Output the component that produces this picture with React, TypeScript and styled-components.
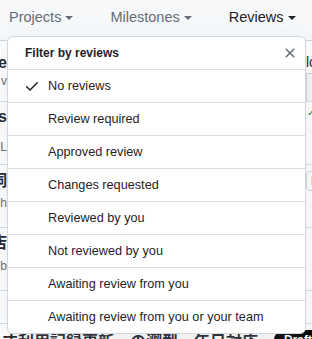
import React from "react";
import styled, { createGlobalStyle } from "styled-components";

const Global = createGlobalStyle`
  html, body { margin: 0; padding: 0; background: #ffffff; }
  body { font-family: "Liberation Sans", Arial, sans-serif; color: #1f2328; }
  * { box-sizing: border-box; }
`;

const Page = styled.div`
  position: relative;
  width: 312px;
  height: 339px;
  overflow: hidden;
  background: #ffffff;
`;

const TopBar = styled.div`
  height: 41px;
  background: #f6f8fa;
  border-bottom: 1px solid #d0d7de;
  display: flex;
  align-items: flex-start;
  gap: 37px;
  padding: 9px 0 0 9px;
`;

const FilterButton = styled.div<{ $active?: boolean }>`
  display: flex;
  align-items: center;
  font-size: 14.5px;
  line-height: 17px;
  color: ${(p) => (p.$active ? "#1f2328" : "#656d76")};
  white-space: nowrap;
`;

const Caret = styled.span`
  display: inline-block;
  width: 0;
  height: 0;
  margin-left: 4px;
  margin-top: 1px;
  border-top: 4.5px solid currentColor;
  border-left: 4px solid transparent;
  border-right: 4px solid transparent;
`;

const List = styled.div`
  display: flex;
  flex-direction: column;
`;

const Row = styled.div<{ $h: number; $pt: number }>`
  height: ${(p) => p.$h}px;
  padding-top: ${(p) => p.$pt}px;
  border-bottom: 1px solid #d8dee4;
  display: flex;
  justify-content: space-between;
`;

const LeftPeek = styled.div`
  width: 7px;
  overflow: hidden;
  display: flex;
  flex-direction: column;
  align-items: flex-end;
`;

const PeekTitle = styled.div`
  font-size: 16px;
  line-height: 20px;
  font-weight: 700;
  white-space: nowrap;
  color: #1f2328;
  font-family: "Liberation Sans", "Noto Sans CJK JP", sans-serif;
`;

const PeekSub = styled.div<{ $mt: number }>`
  font-size: 12px;
  line-height: 16px;
  margin-top: ${(p) => p.$mt}px;
  white-space: nowrap;
  color: #656d76;
`;

const RightPeek = styled.div`
  width: 6px;
  overflow: hidden;
  display: flex;
  flex-direction: column;
  align-items: flex-start;
`;

const RightText = styled.div`
  font-size: 14px;
  line-height: 18px;
  white-space: nowrap;
  color: #1f2328;
`;

const RightBox = styled.div`
  width: 20px;
  height: 34px;
  margin-top: 2px;
  border-left: 1px solid #d0d7de;
  border-top: 1px solid #d0d7de;
  background: #f6f8fa;
`;

const GreenCheck = styled.div`
  color: #1a7f37;
  font-size: 10px;
  line-height: 12px;
  margin-left: 1px;
`;

const Chip = styled.div`
  font-size: 13px;
  line-height: 18px;
  padding: 0 4px;
  border: 1px solid #d0d7de;
  border-radius: 4px;
  color: #1f2328;
`;

const BottomRow = styled.div`
  display: flex;
  align-items: center;
  gap: 8px;
  padding: 6px 0 0 2px;
  white-space: nowrap;
`;

const JpTitle = styled.div`
  font-family: "Noto Sans CJK JP", sans-serif;
  font-size: 16px;
  line-height: 20px;
  font-weight: 700;
  color: #1f2328;
`;

const Dot = styled.span`
  width: 3px;
  height: 3px;
  border-radius: 50%;
  background: #1a7f37;
`;

const Pill = styled.div`
  background: #000;
  color: #fff;
  border-radius: 10px;
  padding: 0 10px;
  font-size: 12px;
  line-height: 20px;
  font-weight: 700;
`;

const Menu = styled.div`
  position: absolute;
  top: 36px;
  left: 7px;
  width: 299px;
  background: #ffffff;
  border: 1px solid #d0d7de;
  border-radius: 6px;
  box-shadow: 0 8px 24px rgba(140, 149, 159, 0.2);
  overflow: hidden;
`;

const MenuHeader = styled.div`
  height: 33px;
  display: flex;
  align-items: center;
  justify-content: space-between;
  padding: 0 7px 0 17px;
  border-bottom: 1px solid #d8dee4;
`;

const MenuTitle = styled.div`
  font-size: 12px;
  font-weight: 700;
  color: #1f2328;
`;

const CloseButton = styled.button`
  border: 0;
  background: transparent;
  padding: 0;
  width: 16px;
  height: 16px;
  display: flex;
  color: #656d76;
  cursor: pointer;
`;

const MenuItem = styled.div`
  height: 33px;
  display: flex;
  align-items: center;
  padding: 0 16px;
  gap: 8px;
  font-size: 12.7px;
  color: #1f2328;
  border-bottom: 1px solid #d8dee4;
  white-space: nowrap;
  &:last-child { border-bottom: 0; height: 32px; }
`;

const IconSlot = styled.span`
  width: 16px;
  height: 16px;
  display: flex;
  color: #1f2328;
`;

const CheckIcon = () => (
  <svg width="16" height="16" viewBox="0 0 16 16" fill="currentColor">
    <path d="M13.78 4.22a.75.75 0 0 1 0 1.06l-7.25 7.25a.75.75 0 0 1-1.06 0L2.22 9.28a.751.751 0 0 1 .018-1.042.751.751 0 0 1 1.042-.018L6 10.94l6.72-6.72a.75.75 0 0 1 1.06 0Z" />
  </svg>
);

const XIcon = () => (
  <svg width="16" height="16" viewBox="0 0 16 16" fill="currentColor">
    <path d="M3.72 3.72a.75.75 0 0 1 1.06 0L8 6.94l3.22-3.22a.749.749 0 0 1 1.275.326.749.749 0 0 1-.215.734L9.06 8l3.22 3.22a.749.749 0 0 1-.326 1.275.749.749 0 0 1-.734-.215L8 9.06l-3.22 3.22a.751.751 0 0 1-1.042-.018.751.751 0 0 1-.018-1.042L6.94 8 3.72 4.78a.75.75 0 0 1 0-1.06Z" />
  </svg>
);

const items = [
  "No reviews",
  "Review required",
  "Approved review",
  "Changes requested",
  "Reviewed by you",
  "Not reviewed by you",
  "Awaiting review from you",
  "Awaiting review from you or your team",
];

const rows = [
  { h: 61, pt: 12, title: "Update the", sub: "v", mt: 0, right: "lo" },
  { h: 63, pt: 5, title: "Fixes", sub: "L", mt: 12, right: "check" },
  { h: 63, pt: 6, title: "データ祠", sub: "h", mt: 4, right: "chip" },
  { h: 63, pt: 5, title: "店", sub: "b", mt: 5, right: "" },
  { h: 33, pt: 0, title: "", sub: "", mt: 0, right: "" },
];

export default function App() {
  return (
    <>
      <Global />
      <Page>
        <TopBar>
          <FilterButton>
            Projects<Caret />
          </FilterButton>
          <FilterButton>
            Milestones<Caret />
          </FilterButton>
          <FilterButton $active>
            Reviews<Caret />
          </FilterButton>
        </TopBar>
        <List>
          {rows.map((r, i) => (
            <Row key={i} $h={r.h} $pt={r.pt}>
              <LeftPeek>
                {r.title && <PeekTitle>{r.title}</PeekTitle>}
                {r.sub && <PeekSub $mt={r.mt}>{r.sub}</PeekSub>}
              </LeftPeek>
              <RightPeek>
                {r.right === "lo" && (
                  <>
                    <RightText>lo</RightText>
                    <RightBox />
                  </>
                )}
                {r.right === "check" && <GreenCheck>✓</GreenCheck>}
                {r.right === "chip" && <Chip>i</Chip>}
              </RightPeek>
            </Row>
          ))}
          <BottomRow>
            <JpTitle>す利用記録更新・の澀型、年日対応</JpTitle>
            <Dot />
            <Pill>Draft</Pill>
          </BottomRow>
        </List>
        <Menu>
          <MenuHeader>
            <MenuTitle>Filter by reviews</MenuTitle>
            <CloseButton aria-label="Close">
              <XIcon />
            </CloseButton>
          </MenuHeader>
          {items.map((label, i) => (
            <MenuItem key={label}>
              <IconSlot>{i === 0 && <CheckIcon />}</IconSlot>
              {label}
            </MenuItem>
          ))}
        </Menu>
      </Page>
    </>
  );
}
